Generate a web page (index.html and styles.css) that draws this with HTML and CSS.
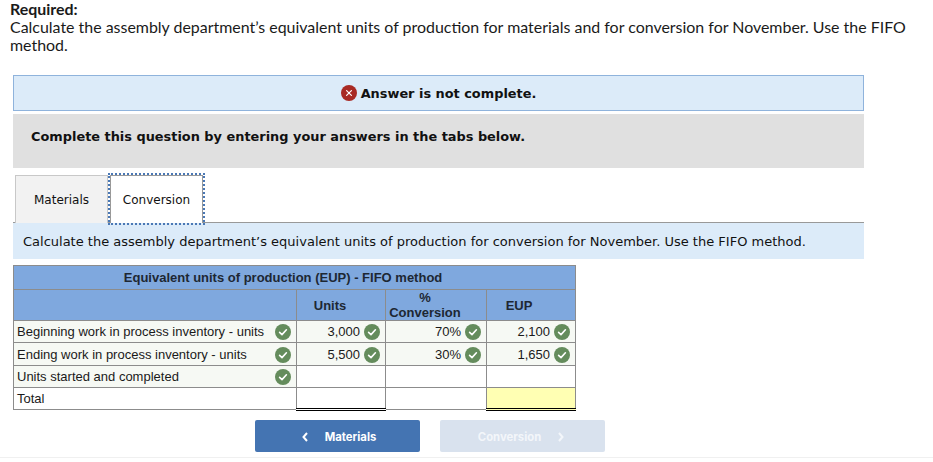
FILE: index.html
```html
<!DOCTYPE html>
<html lang="en">
<head>
<meta charset="utf-8">
<title>Required</title>
<link rel="stylesheet" href="styles.css">
</head>
<body>
<svg class="defs" width="0" height="0" aria-hidden="true">
  <symbol id="ok" viewBox="0 0 16 16">
    <circle cx="8" cy="8" r="8" fill="#648c5c"/>
    <path d="M4.6 8.3l2.400 2.300 4.400-4.800" fill="none" stroke="#fff" stroke-width="1.600" stroke-linecap="round" stroke-linejoin="round"/>
  </symbol>
</svg>
<div class="required">
  <strong class="req-title">Required:</strong>
  <p class="req-text">Calculate the assembly department’s equivalent units of production for materials and for conversion for November. Use the FIFO method.</p>
</div>
<div class="banner">
  <svg class="x-icon" viewBox="0 0 16 16" aria-hidden="true">
    <circle cx="8" cy="8" r="8" fill="#a82a24"/>
    <path d="M5.600 5.600l4.800 4.800M10.400 5.600l-4.800 4.800" stroke="#fff" stroke-width="1.200" stroke-linecap="round"/>
  </svg>
  <span>Answer is not complete.</span>
</div>
<div class="complete">Complete this question by entering your answers in the tabs below.</div>
<div class="tabs">
  <div class="tab">Materials</div>
  <div class="tab tab-active">Conversion</div>
</div>
<div class="instruction">Calculate the assembly department’s equivalent units of production for conversion for November. Use the FIFO method.</div>
<table class="eup">
  <colgroup>
    <col class="c-label"><col class="c-units"><col class="c-pct"><col class="c-eup">
  </colgroup>
  <thead>
    <tr class="h1"><th colspan="4">Equivalent units of production (EUP) - FIFO method</th></tr>
    <tr class="h2"><th></th><th>Units</th><th>%<br>Conversion</th><th>EUP</th></tr>
  </thead>
  <tbody>
    <tr class="filled r1">
      <td><div class="label">Beginning work in process inventory - units<svg class="ok"><use href="#ok"/></svg></div></td>
      <td><div class="num">3,000<svg class="ok"><use href="#ok"/></svg></div></td>
      <td><div class="num">70%<svg class="ok"><use href="#ok"/></svg></div></td>
      <td><div class="num">2,100<svg class="ok"><use href="#ok"/></svg></div></td>
    </tr>
    <tr class="filled r2">
      <td><div class="label">Ending work in process inventory - units<svg class="ok"><use href="#ok"/></svg></div></td>
      <td><div class="num">5,500<svg class="ok"><use href="#ok"/></svg></div></td>
      <td><div class="num">30%<svg class="ok"><use href="#ok"/></svg></div></td>
      <td><div class="num">1,650<svg class="ok"><use href="#ok"/></svg></div></td>
    </tr>
    <tr class="r3">
      <td class="tint"><div class="label">Units started and completed<svg class="ok"><use href="#ok"/></svg></div></td>
      <td></td><td></td><td></td>
    </tr>
    <tr class="r4">
      <td><div class="label">Total</div></td>
      <td class="total"></td><td></td><td class="total yellow"></td>
    </tr>
  </tbody>
</table>
<div class="nav">
  <div class="btn btn-prev">
    <svg class="chev" viewBox="0 0 8 12" aria-hidden="true"><path d="M6 2L2.500 6 6 10" fill="none" stroke="currentColor" stroke-width="2"/></svg>
    <span>Materials</span>
  </div>
  <div class="btn btn-next">
    <span>Conversion</span>
    <svg class="chev" viewBox="0 0 8 12" aria-hidden="true"><path d="M2 2l3.500 4L2 10" fill="none" stroke="currentColor" stroke-width="2"/></svg>
  </div>
</div>
```

FILE: styles.css
```css
html, body { margin: 0; padding: 0; background: #fff; }
body { height: 462px; overflow: hidden; color: #1a1a1a; font-family: "Lato", sans-serif; }
.defs { position: absolute; }

.required { padding: 0 24px 0 10px; font-size: 15.95px; line-height: 18px; }
.req-title { display: block; font-weight: 700; }
.req-text { margin: 0; }

.banner {
  box-sizing: border-box; margin: 21px 69px 0 13px; height: 36px;
  background: #dcebf9; border: 1px solid #8fb3dc;
  display: flex; align-items: center; justify-content: center; gap: 4px;
  font: 700 12.9px "DejaVu Sans", sans-serif; color: #111;
}
.x-icon { width: 16px; height: 16px; }

.complete {
  box-sizing: border-box; margin: 3px 69px 0 13px; height: 54px; padding: 14px 18px 0;
  background: #e0e0e0; font: 700 12.9px/18px "DejaVu Sans", sans-serif; color: #111;
}

.tabs { display: flex; margin: 7px 69px 0 15px; height: 47px; gap: 2px; }
.tab {
  box-sizing: border-box; width: 93px; height: 48px; padding-top: 16px; text-align: center;
  background: #f2f2f2; border: 1px solid #c8c8c8; border-bottom: 0;
  font: 12px/16px "DejaVu Sans", sans-serif; color: #111;
}
.tab-active { background: #fff; outline: 2px dotted #4a78b5; outline-offset: 0; border-color: #999; position: relative; z-index: 1; }

.instruction {
  box-sizing: border-box; margin: 0 69px 0 13px; height: 37px; padding: 10px 10px 0;
  background: #dcebf9; border-top: 1px solid #999;
  font: 13px/17px "DejaVu Sans", sans-serif; color: #111;
}

.eup {
  margin: 6px 0 0 13px; width: 562px; table-layout: fixed; border-collapse: collapse;
  font: 13px/14px "Liberation Sans", sans-serif; color: #1a1a1a;
}
.c-label { width: 283px; } .c-units { width: 89px; } .c-pct { width: 101px; } .c-eup { width: 89px; }
.eup th, .eup td { border: 1px solid #8c8c8c; padding: 0; }
.eup th { background: #7fa8de; font-weight: 700; color: #1d2733; text-align: center; }
.h1 { height: 24px; }
.h1 th { padding-right: 23px; }
.h2 { height: 31px; }
.eup .h2 th { line-height: 15px; padding: 0 22px 0 0; }
.eup .h2 th:last-child { padding-right: 24px; }
.r1 { height: 22px; } .r2 { height: 23px; } .r3 { height: 22px; } .r4 { height: 22px; }
.filled td, .tint { background: #f6f9f4; }
.label { display: flex; justify-content: space-between; align-items: center; padding: 0 5px 0 3px; }
.num { display: flex; justify-content: flex-end; align-items: center; gap: 4px; padding-right: 5px; }
.r2 .label, .r2 .num { padding-top: 1px; }
.ok { width: 16px; height: 16px; flex: none; }
.eup td.total { border-top: 1px solid #000; border-bottom: 3px double #000; }
.eup td.yellow { background: #ffffb3; }

.nav { display: flex; gap: 20px; margin-top: 9px; padding: 0 0 5px 255px; border-bottom: 1px solid #f0f0f0; }
.btn {
  box-sizing: border-box; width: 165px; height: 32px; border-radius: 2px; display: flex; align-items: center; justify-content: center; gap: 16px;
  padding-top: 2px; font: 700 11.300px "Inter", sans-serif; color: #fff;
}
.btn-prev { background: #4474b2; padding-left: 2px; }
.btn-next { background: #d9e2ee; color: #f3f6fa; padding-right: 2px; }
.chev { width: 8px; height: 12px; }
```
